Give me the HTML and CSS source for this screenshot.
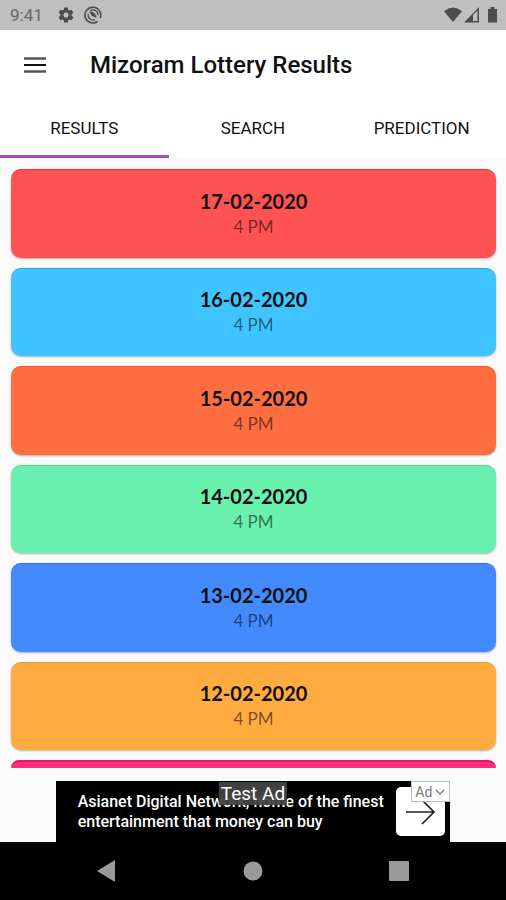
FILE: index.html
```html
<!DOCTYPE html>
<html lang="en">
<head>
<meta charset="utf-8">
<meta name="viewport" content="width=device-width, initial-scale=1">
<title>Mizoram Lottery Results</title>
<link rel="stylesheet" href="styles.css">
</head>
<body>
<div class="app">
  <div class="status">
    <span class="clock">9:41</span>
    <svg class="gear" width="18" height="18" viewBox="0 0 24 24" fill="#4c4c4c"><path fill-rule="evenodd" d="M19.43 12.98c.04-.32.07-.64.07-.98s-.03-.66-.07-.98l2.11-1.65a.5.5 0 0 0 .12-.64l-2-3.46a.5.5 0 0 0-.61-.22l-2.49 1a7.3 7.3 0 0 0-1.69-.98l-.38-2.65A.49.49 0 0 0 14 2h-4a.49.49 0 0 0-.49.42l-.38 2.65c-.61.25-1.17.59-1.69.98l-2.49-1a.5.5 0 0 0-.61.22l-2 3.46a.5.5 0 0 0 .12.64l2.11 1.65c-.04.32-.07.65-.07.98s.03.66.07.98l-2.11 1.65a.5.5 0 0 0-.12.64l2 3.46c.12.22.39.3.61.22l2.49-1c.52.4 1.08.73 1.69.98l.38 2.65c.03.24.24.42.49.42h4c.25 0 .46-.18.49-.42l.38-2.65c.61-.25 1.17-.59 1.69-.98l2.49 1c.23.09.49 0 .61-.22l2-3.46a.5.5 0 0 0-.12-.64zM12 15.4a3.4 3.4 0 1 1 0-6.8 3.4 3.400 0 0 1 0 6.800z"/></svg>
    <svg class="sync" width="18" height="18" viewBox="0 0 18 18" fill="none" stroke="#4c4c4c"><path stroke-width="1.600" d="M13.500 15.500A7.900 7.900 0 1 1 16.200 12"/><path stroke-width="1.200" d="M6 5A5 5 0 0 1 14 9.500M11 13.600A5 5 0 0 1 4.200 8"/><path fill="#4c4c4c" stroke="none" d="M5 6Q10.500 4.500 12.800 11.500L10 11 7.500 9.200z"/></svg>
    <svg class="signals" width="54" height="18" viewBox="0 0 54 18" fill="#4c4c4c"><path d="M0 5.200Q9-2.200 18 5.200L9 16z"/><path fill-rule="evenodd" d="M20 16.500L35 1v15.500zM29 9v6h4.500V4.500z"/><path d="M44 3h2.500V1h4v2H53v13.500h-9z"/></svg>
  </div>
  <header class="bar">
    <button class="menu" aria-label="Menu"><svg width="24" height="18" viewBox="0 0 24 18"><path d="M1 2.500h22M1 15.500h22" stroke="#555" stroke-width="2.500"/><path d="M1 9h22" stroke="#111" stroke-width="2"/></svg></button>
    <h1 class="title">Mizoram Lottery Results</h1>
  </header>
  <nav class="tabs">
    <a class="tab active" href="#results">RESULTS</a>
    <a class="tab" href="#search">SEARCH</a>
    <a class="tab" href="#prediction">PREDICTION</a>
  </nav>
  <main class="list" id="results">
    <button class="card red"><span class="date">17-02-2020</span><span class="time">4 PM</span></button>
    <button class="card sky"><span class="date">16-02-2020</span><span class="time">4 PM</span></button>
    <button class="card orange"><span class="date">15-02-2020</span><span class="time">4 PM</span></button>
    <button class="card green"><span class="date">14-02-2020</span><span class="time">4 PM</span></button>
    <button class="card blue"><span class="date">13-02-2020</span><span class="time">4 PM</span></button>
    <button class="card amber"><span class="date">12-02-2020</span><span class="time">4 PM</span></button>
    <div class="peek"></div>
  </main>
  <aside class="ad">
    <p class="copy">Asianet Digital Network, home of the finest entertainment that money can buy</p>
    <a class="go" href="#ad" aria-label="Open"><svg width="32" height="28" viewBox="0 0 32 28" fill="none" stroke="#222" stroke-width="1.700"><path d="M1 14h28M17 2l12 12-12 12"/></svg></a>
    <span class="test">Test Ad</span>
    <span class="badge">Ad<svg width="10" height="6" viewBox="0 0 10 6" fill="none" stroke="#777" stroke-width="1.300"><path d="M1 1l4 4 4-4"/></svg></span>
  </aside>
  <footer class="nav">
    <button class="key" aria-label="Back"><svg width="20" height="22" viewBox="0 0 20 22" fill="#999"><path d="M0 11L18 0v22z"/></svg></button>
    <button class="key" aria-label="Home"><svg width="20" height="20" viewBox="0 0 20 20" fill="#999"><circle cx="10" cy="10" r="9.500"/></svg></button>
    <button class="key" aria-label="Recents"><svg width="20" height="20" viewBox="0 0 20 20" fill="#999"><rect width="20" height="20" rx="1"/></svg></button>
  </footer>
</div>
</body>
</html>
```
FILE: styles.css
```css
* { box-sizing: border-box; }
body { margin: 0; font-family: Roboto, "Liberation Sans", sans-serif; color: #111; background: #fafafa; }
button { border: 0; padding: 0; background: none; font: inherit; color: inherit; }
a { color: inherit; text-decoration: none; }
svg { display: block; flex: none; }
.app { display: flex; flex-direction: column; height: 100vh; }
.status { display: flex; align-items: center; height: 30px; padding: 0 8px 0 10px; background: #bfbfbf; }
.clock { width: 47px; font-size: 17px; line-height: 30px; color: #666; }
.sync { margin-left: 9px; }
.signals { margin-left: auto; }
.bar { display: flex; align-items: center; height: 70px; padding-left: 23px; background: #fff; }
.menu { width: 24px; }
.title { margin: 0 0 0 43px; font-size: 24px; line-height: 32px; font-weight: 500; }
.tabs { display: grid; grid-template-columns: repeat(3, 1fr); height: 58px; background: #fff; }
.tab { display: flex; align-items: center; justify-content: center; font-size: 17px; border-bottom: 3px solid transparent; }
.active { border-color: #ab47bc; }
.list { flex: 1; min-height: 0; margin-bottom: 13px; padding: 11px 10px 0 11px; display: grid; grid-template-rows: repeat(6, 1fr) 8px; gap: 10px; }
.card { display: flex; flex-direction: column; align-items: center; justify-content: center; border-radius: 10px; font-family: Lato, sans-serif; box-shadow: 0 1px 2px rgba(0, 0, 0, .3); }
.date { font-size: 20px; line-height: 26px; font-weight: 700; }
.time { font-size: 17px; line-height: 26px; color: rgba(0, 0, 0, .55); }
.red { background: #ff5252; border-top: 1px solid #ee2b33; }
.sky { background: #40c4ff; border-top: 1px solid #16aef0; }
.orange { background: #ff6e40; border-top: 1px solid #f35226; }
.green { background: #69f0ae; border-top: 1px solid #48df95; }
.blue { background: #448aff; border-top: 1px solid #286ff0; }
.amber { background: #ffab40; border-top: 1px solid #f39826; }
.peek { background: #ff2d78; border-top: 2px solid #e9156a; border-radius: 10px 10px 0 0; }
.ad { position: relative; display: flex; align-items: center; justify-content: space-between; align-self: center; width: 78%; height: 61px; padding: 0 5px 0 22px; background: #000; color: #fff; }
.copy { flex: 1; max-width: 310px; margin: 0; font-size: 16px; line-height: 20px; font-weight: 500; }
.go { display: grid; place-items: center; width: 49px; height: 49px; border-radius: 5px; background: #fff; }
.test { position: absolute; top: 1px; left: 50%; transform: translateX(-50%); padding: 0 2px; font-size: 19px; line-height: 23px; background: rgba(68, 68, 68, .95); }
.badge { position: absolute; top: 0; right: 0; display: flex; align-items: center; gap: 3px; height: 21px; padding: 0 4px 0 3px; border: 1px solid #bbb; background: #fff; color: #777; font-size: 14px; }
.nav { display: flex; justify-content: center; gap: 126px; height: 58px; background: #000; }
.key { display: grid; place-items: center; width: 20px; }
```
